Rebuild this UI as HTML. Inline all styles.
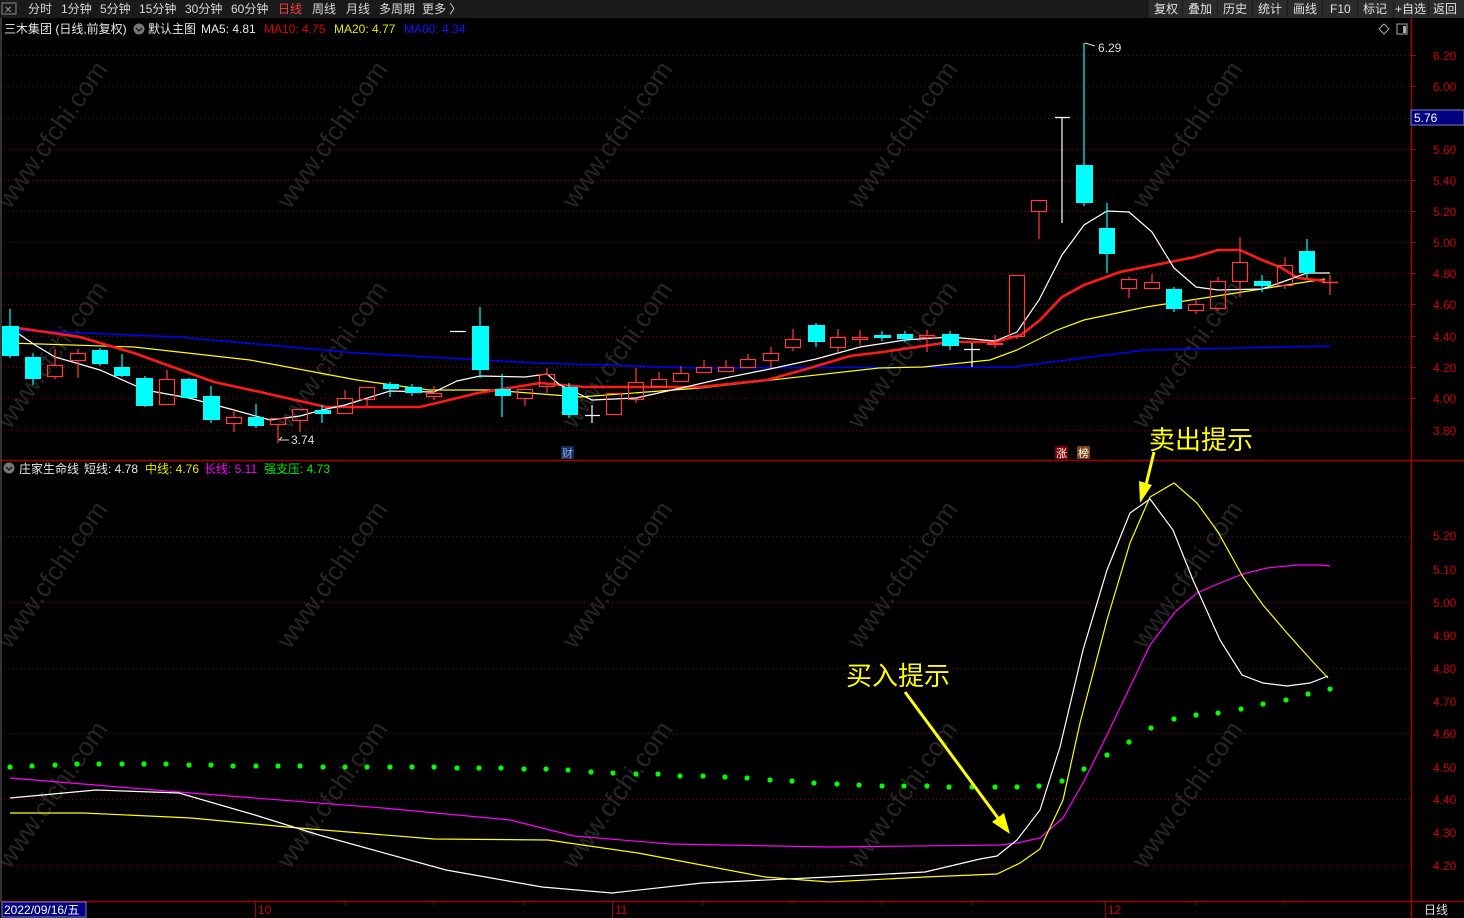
<!DOCTYPE html>
<html><head><meta charset="utf-8"><style>
html,body{margin:0;padding:0;background:#000;width:1464px;height:918px;overflow:hidden}
svg{display:block}
text{font-family:"Liberation Sans","Noto Sans CJK SC",sans-serif}
</style></head><body>
<svg width="1464" height="918" viewBox="0 0 1464 918" xmlns="http://www.w3.org/2000/svg">
<!-- top bar -->
<rect x="0" y="0" width="1464" height="18" fill="#1a1a1a"/>
<rect x="2" y="3" width="14" height="11" fill="none" stroke="#888" stroke-width="1"/>
<text x="4" y="13" font-size="10" fill="#999">✕</text>
<g font-size="12" fill="#d8d8d8">
<text x="28" y="13">分时</text><text x="61" y="13">1分钟</text><text x="100" y="13">5分钟</text><text x="139" y="13">15分钟</text><text x="185" y="13">30分钟</text><text x="231" y="13">60分钟</text><text x="278" y="13" fill="#ff3c3c">日线</text><text x="312" y="13">周线</text><text x="346" y="13">月线</text><text x="379" y="13">多周期</text><text x="422" y="13">更多 〉</text>
</g>
<g fill="#2b2b2b">
<rect x="1149" y="0" width="33" height="18"/><rect x="1183" y="0" width="34" height="18"/><rect x="1218" y="0" width="34" height="18"/><rect x="1253" y="0" width="34" height="18"/><rect x="1288" y="0" width="34" height="18"/><rect x="1323" y="0" width="34" height="18"/><rect x="1358" y="0" width="35" height="18"/><rect x="1394" y="0" width="34" height="18"/><rect x="1429" y="0" width="35" height="18"/>
</g>
<g font-size="12" fill="#e0e0e0">
<text x="1154" y="13">复权</text><text x="1188" y="13">叠加</text><text x="1223" y="13">历史</text><text x="1258" y="13">统计</text><text x="1293" y="13">画线</text><text x="1330" y="13">F10</text><text x="1363" y="13">标记</text><text x="1395" y="13">+自选</text><text x="1433" y="13">返回</text>
</g>
<!-- legend top -->
<g font-size="12">
<text x="4" y="33" fill="#e8e8e8">三木集团 (日线,前复权)</text>
<circle cx="139" cy="29" r="5.5" fill="#777"/><path d="M136 28 L139 31 L142 28" stroke="#111" stroke-width="1.3" fill="none"/>
<text x="148" y="33" fill="#e8e8e8">默认主图</text>
<text x="201" y="33" fill="#e8e8e8">MA5: 4.81</text>
<text x="264" y="33" fill="#e00000">MA10: 4.75</text>
<text x="334" y="33" fill="#e6e600">MA20: 4.77</text>
<text x="404" y="33" fill="#1414ff">MA60: 4.34</text>
</g>
<path d="M1384 24 L1389 29 L1384 34 L1379 29 Z" fill="none" stroke="#aaa"/>
<rect x="1397" y="24" width="10" height="10" fill="none" stroke="#aaa"/><rect x="1403" y="26" width="3" height="7" fill="#aaa"/>
<!-- watermarks -->
<g font-size="26" fill="#262626" font-family="Liberation Sans">
<text transform="translate(10,210) rotate(-55)">www.cfchi.com</text>
<text transform="translate(290,210) rotate(-55)">www.cfchi.com</text>
<text transform="translate(575,210) rotate(-55)">www.cfchi.com</text>
<text transform="translate(860,210) rotate(-55)">www.cfchi.com</text>
<text transform="translate(1145,210) rotate(-55)">www.cfchi.com</text>
<text transform="translate(10,430) rotate(-55)">www.cfchi.com</text>
<text transform="translate(290,430) rotate(-55)">www.cfchi.com</text>
<text transform="translate(575,430) rotate(-55)">www.cfchi.com</text>
<text transform="translate(860,430) rotate(-55)">www.cfchi.com</text>
<text transform="translate(1145,430) rotate(-55)">www.cfchi.com</text>
<text transform="translate(10,650) rotate(-55)">www.cfchi.com</text>
<text transform="translate(290,650) rotate(-55)">www.cfchi.com</text>
<text transform="translate(575,650) rotate(-55)">www.cfchi.com</text>
<text transform="translate(860,650) rotate(-55)">www.cfchi.com</text>
<text transform="translate(1145,650) rotate(-55)">www.cfchi.com</text>
<text transform="translate(10,870) rotate(-55)">www.cfchi.com</text>
<text transform="translate(290,870) rotate(-55)">www.cfchi.com</text>
<text transform="translate(575,870) rotate(-55)">www.cfchi.com</text>
<text transform="translate(860,870) rotate(-55)">www.cfchi.com</text>
<text transform="translate(1145,870) rotate(-55)">www.cfchi.com</text>
</g>
<!-- grid -->
<g stroke="#8a0000" stroke-width="1" stroke-dasharray="1,3">
<line x1="0" x2="1410" y1="55.5" y2="55.5"/><line x1="0" x2="1410" y1="86.5" y2="86.5"/><line x1="0" x2="1410" y1="118.5" y2="118.5"/><line x1="0" x2="1410" y1="149.5" y2="149.5"/><line x1="0" x2="1410" y1="180.5" y2="180.5"/><line x1="0" x2="1410" y1="211.5" y2="211.5"/><line x1="0" x2="1410" y1="242.5" y2="242.5"/><line x1="0" x2="1410" y1="273.5" y2="273.5"/><line x1="0" x2="1410" y1="304.5" y2="304.5"/><line x1="0" x2="1410" y1="336.5" y2="336.5"/><line x1="0" x2="1410" y1="367.5" y2="367.5"/><line x1="0" x2="1410" y1="398.5" y2="398.5"/><line x1="0" x2="1410" y1="430.5" y2="430.5"/>
<line x1="0" x2="1410" y1="536.5" y2="536.5"/><line x1="0" x2="1410" y1="602.5" y2="602.5"/><line x1="0" x2="1410" y1="668.5" y2="668.5"/><line x1="0" x2="1410" y1="733.5" y2="733.5"/><line x1="0" x2="1410" y1="799.5" y2="799.5"/><line x1="0" x2="1410" y1="865.5" y2="865.5"/>
</g>
<!-- frame lines -->
<g stroke="#a00000" stroke-width="1.5">
<line x1="1411.5" y1="18" x2="1411.5" y2="918"/>
<line x1="0" y1="460.5" x2="1464" y2="460.5"/>
<line x1="0" y1="901.5" x2="1464" y2="901.5"/>
<line x1="1" y1="18" x2="1" y2="901" stroke="#444"/>
</g>
<!-- axis labels top -->
<g font-size="12" fill="#cc0000">
<text x="1433" y="60">6.20</text><text x="1433" y="91">6.00</text><text x="1433" y="154">5.60</text><text x="1433" y="185">5.40</text><text x="1433" y="216">5.20</text><text x="1433" y="247">5.00</text><text x="1433" y="278">4.80</text><text x="1433" y="309">4.60</text><text x="1433" y="341">4.40</text><text x="1433" y="372">4.20</text><text x="1433" y="403">4.00</text><text x="1433" y="435">3.80</text>
<text x="1433" y="540">5.20</text><text x="1433" y="574">5.10</text><text x="1433" y="607">5.00</text><text x="1433" y="640">4.90</text><text x="1433" y="673">4.80</text><text x="1433" y="706">4.70</text><text x="1433" y="738">4.60</text><text x="1433" y="772">4.50</text><text x="1433" y="804">4.40</text><text x="1433" y="837">4.30</text><text x="1433" y="870">4.20</text>
</g>
<g stroke="#a00000"><line x1="1411" x2="1416" y1="55.5" y2="55.5"/><line x1="1411" x2="1416" y1="86.5" y2="86.5"/><line x1="1411" x2="1416" y1="149.5" y2="149.5"/><line x1="1411" x2="1416" y1="180.5" y2="180.5"/><line x1="1411" x2="1416" y1="211.5" y2="211.5"/><line x1="1411" x2="1416" y1="242.5" y2="242.5"/><line x1="1411" x2="1416" y1="273.5" y2="273.5"/><line x1="1411" x2="1416" y1="304.5" y2="304.5"/><line x1="1411" x2="1416" y1="336.5" y2="336.5"/><line x1="1411" x2="1416" y1="367.5" y2="367.5"/><line x1="1411" x2="1416" y1="398.5" y2="398.5"/></g>
<rect x="1411" y="110" width="53" height="15" fill="#000080" stroke="#8080c0" stroke-width="1"/>
<text x="1414" y="122" font-size="12" fill="#fff">5.76</text>
<!-- MA lines -->
<polyline fill="none" stroke="#0000ff" stroke-width="1.5" points="10,330 178,337 357,353 536,363 700,368 1012,367 1146,350 1330,346"/>
<polyline fill="none" stroke="#ffff00" stroke-width="1.2" points="9,343 134,347 250,360 357,380 429,390 491,390 580,397 700,388 879,368 923,367 990,360 1017,350 1057,330 1084,320 1146,307 1236,293 1325,279"/>
<polyline fill="none" stroke="#ff1a1a" stroke-width="2.6" points="11,327 80,337 134,353 214,382 260,392 326,407 420,407 478,393 540,383 585,387 647,387 700,387 767,380 803,370 850,356 883,352 950,342 995,342 1021,335 1040,320 1062,297 1084,285 1120,272 1160,264 1195,257 1218,250 1240,250 1262,260 1280,267 1298,278 1325,281"/>
<polyline fill="none" stroke="#ffffff" stroke-width="1.2" points="10,328 35,345 55,357 100,370 145,390 189,398 234,410 270,420 300,416 322,410 345,405 390,391 434,392 457,381 480,376 525,377 547,374 560,385 592,400 636,398 681,388 725,378 770,369 816,359 860,347 905,340 950,337 995,341 1017,332 1039,300 1062,255 1084,225 1107,211 1129,212 1152,232 1174,268 1196,287 1218,290 1262,289 1285,281 1307,273 1330,273"/>
<!-- candles -->
<g stroke="#00ffff" stroke-width="1.2">
<line x1="10" x2="10" y1="309" y2="358"/><line x1="33" x2="33" y1="353" y2="385"/><line x1="100" x2="100" y1="348" y2="366"/><line x1="122" x2="122" y1="354" y2="377"/><line x1="145" x2="145" y1="376" y2="407"/><line x1="189" x2="189" y1="378" y2="399"/><line x1="211" x2="211" y1="386" y2="423"/><line x1="256" x2="256" y1="404" y2="428"/><line x1="322" x2="322" y1="405" y2="423"/><line x1="390" x2="390" y1="382" y2="397"/><line x1="412" x2="412" y1="384" y2="396"/><line x1="480" x2="480" y1="307" y2="378"/><line x1="502" x2="502" y1="374" y2="417"/><line x1="569" x2="569" y1="383" y2="418"/>
<line x1="816" x2="816" y1="323" y2="347"/><line x1="882" x2="882" y1="331" y2="341"/><line x1="905" x2="905" y1="331" y2="342"/><line x1="950" x2="950" y1="331" y2="350"/><line x1="1084" x2="1084" y1="43" y2="206"/><line x1="1107" x2="1107" y1="203" y2="273"/><line x1="1174" x2="1174" y1="287" y2="312"/><line x1="1262" x2="1262" y1="275" y2="292"/><line x1="1307" x2="1307" y1="239" y2="278"/>
</g>
<g fill="#00ffff">
<rect x="2" y="326" width="17" height="30"/><rect x="25" y="357" width="16" height="22"/><rect x="92" y="350" width="16" height="14"/><rect x="114" y="367" width="16" height="9"/><rect x="136" y="378" width="17" height="28"/><rect x="181" y="379" width="16" height="19"/><rect x="203" y="396" width="17" height="24"/><rect x="248" y="417" width="16" height="9"/><rect x="315" y="410" width="16" height="4"/><rect x="383" y="384" width="16" height="5"/><rect x="405" y="387" width="17" height="6"/><rect x="472" y="326" width="17" height="44"/><rect x="495" y="389" width="16" height="7"/><rect x="562" y="387" width="16" height="28"/>
<rect x="808" y="325" width="17" height="17"/><rect x="874" y="335" width="17" height="3"/><rect x="897" y="334" width="16" height="5"/><rect x="942" y="334" width="17" height="12"/><rect x="1076" y="165" width="17" height="38"/><rect x="1099" y="228" width="16" height="26"/><rect x="1166" y="289" width="16" height="20"/><rect x="1254" y="281" width="17" height="5"/><rect x="1299" y="251" width="16" height="22"/>
</g>
<g stroke="#ff3c3c" stroke-width="1.2" fill="none">
<path d="M55 349V365M55 377V379M78 349V353M78 361V378M167 370V379M234 410V417M234 423V432M278 425V443M300 421V432M345 390V398M367 400V406M434 386V393M434 397V400M525 399V406M547 368V374M547 387V393M636 368V382M636 400V403M659 372V379M681 366V373M704 360V367M726 360V367M748 354V359M771 347V353M771 361V368M793 329V339M793 348V351M838 329V337M838 348V352M860 330V337M860 340V345M927 330V335M927 337V352M995 335V343M995 345V348M1017 337V339M1039 212V239M1129 277V279M1129 289V298M1152 274V282M1196 299V304M1196 311V314M1218 277V281M1218 309V311M1240 237V262M1240 282V297M1285 257V265M1285 286V289M1330 275V295"/>
<rect x="47.5" y="365.5" width="15" height="11"/><rect x="70.5" y="353.5" width="15" height="7"/><rect x="159.5" y="379.5" width="15" height="25"/><rect x="226.5" y="417.5" width="15" height="6"/><rect x="270.5" y="418.5" width="15" height="6"/><rect x="292.5" y="409.5" width="15" height="11"/><rect x="337.5" y="398.5" width="15" height="15"/><rect x="359.5" y="387.5" width="15" height="12"/><rect x="426.5" y="393.5" width="15" height="3"/><rect x="517.5" y="389.5" width="15" height="9"/><rect x="539.5" y="374.5" width="15" height="12"/><rect x="606.5" y="393.5" width="15" height="21"/><rect x="628.5" y="382.5" width="15" height="17"/><rect x="651.5" y="379.5" width="15" height="7"/><rect x="673.5" y="373.5" width="15" height="8"/><rect x="696.5" y="367.5" width="15" height="5"/><rect x="718.5" y="367.5" width="15" height="4"/><rect x="740.5" y="359.5" width="15" height="8"/><rect x="763.5" y="353.5" width="15" height="7"/><rect x="785.5" y="339.5" width="15" height="8"/><rect x="830.5" y="337.5" width="15" height="10"/><rect x="852.5" y="337.5" width="15" height="2"/><rect x="919.5" y="335.5" width="15" height="2"/><rect x="987.5" y="343.5" width="15" height="1"/><rect x="1009.5" y="275.5" width="15" height="61"/><rect x="1031.5" y="200.5" width="15" height="11"/><rect x="1121.5" y="279.5" width="15" height="9"/><rect x="1144.5" y="282.5" width="15" height="6"/><rect x="1188.5" y="304.5" width="15" height="6"/><rect x="1210.5" y="281.5" width="15" height="27"/><rect x="1232.5" y="262.5" width="15" height="19"/><rect x="1277.5" y="265.5" width="15" height="20"/>
<line x1="1322" x2="1338" y1="282.5" y2="282.5" stroke-width="1.5"/>
</g>
<g stroke="#fff" stroke-width="1.2" fill="none">
<path d="M450 331.5H466M585 415.5H600M592 405V423M964 349.5H980M972 343V367M1055 117.5H1070M1062 117V223"/>
</g>
<text x="1098" y="52" font-size="12" fill="#ddd">6.29</text>
<path d="M1085 43 L1095 46" stroke="#ddd" fill="none"/>
<text x="291" y="444" font-size="12" fill="#ddd">3.74</text>
<path d="M279 440 L289 440 M279 440 L282 437" stroke="#ddd" fill="none"/>
<rect x="561" y="446" width="13" height="13" fill="#1a2a50"/><text x="562" y="457" font-size="11" fill="#8ab4ff">财</text>
<rect x="1055" y="446" width="13" height="13" fill="#7a0000"/><text x="1056" y="457" font-size="11" fill="#fff">涨</text>
<rect x="1077" y="446" width="13" height="13" fill="#7a4010"/><text x="1078" y="457" font-size="11" fill="#fff">榜</text>
<!-- lower legend -->
<g font-size="12">
<circle cx="9" cy="468" r="5.5" fill="#777"/><path d="M6 467 L9 470 L12 467" stroke="#111" stroke-width="1.3" fill="none"/>
<text x="19" y="473" fill="#e8e8e8">庄家生命线</text>
<text x="84" y="473" fill="#e8e8e8">短线: 4.78</text>
<text x="145" y="473" fill="#e6e600">中线: 4.76</text>
<text x="204" y="473" fill="#ff00ff">长线: 5.11</text>
<text x="264" y="473" fill="#00ee00">强支压: 4.73</text>
</g>
<!-- lower curves -->
<polyline fill="none" stroke="#ff00ff" stroke-width="1.2" points="10,778 191,793 383,808 510,820 574,836 670,844 829,847 1000,845 1017,843 1040,838 1063,818 1083,783 1107,735 1130,687 1150,645 1175,612 1197,593 1220,583 1243,574 1267,568 1297,565 1320,565 1330,566"/>
<polyline fill="none" stroke="#ffff00" stroke-width="1.2" points="10,813 83,813 191,818 287,827 434,839 548,840 638,853 765,877 829,882 925,877 997,874 1020,863 1040,849 1063,800 1080,723 1107,620 1130,543 1150,497 1174,483 1197,503 1218,532 1243,577 1263,605 1287,633 1313,662 1328,678"/>
<polyline fill="none" stroke="#ffffff" stroke-width="1.2" points="10,798 96,790 179,793 255,815 319,835 446,870 542,887 612,893 702,883 829,877 925,872 980,859 997,856 1017,840 1040,810 1060,747 1083,650 1107,570 1130,513 1150,499 1173,530 1193,580 1220,640 1242,675 1263,683 1287,686 1310,683 1328,676"/>
<g fill="#00ff00">
<circle cx="10" cy="767" r="2.6"/><circle cx="32" cy="766" r="2.6"/><circle cx="55" cy="765" r="2.6"/><circle cx="77" cy="764" r="2.6"/><circle cx="99" cy="764" r="2.6"/><circle cx="122" cy="764" r="2.6"/><circle cx="144" cy="764" r="2.6"/><circle cx="166" cy="764" r="2.6"/><circle cx="189" cy="765" r="2.6"/><circle cx="211" cy="765" r="2.6"/><circle cx="233" cy="766" r="2.6"/><circle cx="256" cy="766" r="2.6"/><circle cx="278" cy="766" r="2.6"/><circle cx="300" cy="766" r="2.6"/><circle cx="323" cy="767" r="2.6"/><circle cx="345" cy="767" r="2.6"/><circle cx="367" cy="767" r="2.6"/><circle cx="390" cy="767" r="2.6"/><circle cx="412" cy="767" r="2.6"/><circle cx="434" cy="767" r="2.6"/><circle cx="457" cy="768" r="2.6"/><circle cx="479" cy="768" r="2.6"/><circle cx="501" cy="768" r="2.6"/><circle cx="524" cy="769" r="2.6"/><circle cx="546" cy="769" r="2.6"/><circle cx="568" cy="770" r="2.6"/><circle cx="591" cy="772" r="2.6"/><circle cx="613" cy="773" r="2.6"/><circle cx="636" cy="774" r="2.6"/><circle cx="658" cy="774" r="2.6"/><circle cx="680" cy="776" r="2.6"/><circle cx="703" cy="776" r="2.6"/><circle cx="725" cy="777" r="2.6"/><circle cx="747" cy="778" r="2.6"/><circle cx="770" cy="780" r="2.6"/><circle cx="792" cy="781" r="2.6"/><circle cx="814" cy="783" r="2.6"/><circle cx="837" cy="784" r="2.6"/><circle cx="859" cy="785" r="2.6"/><circle cx="882" cy="786" r="2.6"/><circle cx="904" cy="786" r="2.6"/><circle cx="927" cy="786" r="2.6"/><circle cx="949" cy="787" r="2.6"/><circle cx="972" cy="787" r="2.6"/><circle cx="995" cy="787" r="2.6"/><circle cx="1017" cy="787" r="2.6"/><circle cx="1039" cy="786" r="2.6"/><circle cx="1062" cy="781" r="2.6"/><circle cx="1084" cy="769" r="2.6"/><circle cx="1107" cy="755" r="2.6"/><circle cx="1129" cy="742" r="2.6"/><circle cx="1151" cy="728" r="2.6"/><circle cx="1174" cy="719" r="2.6"/><circle cx="1196" cy="715" r="2.6"/><circle cx="1218" cy="713" r="2.6"/><circle cx="1241" cy="709" r="2.6"/><circle cx="1263" cy="704" r="2.6"/><circle cx="1286" cy="700" r="2.6"/><circle cx="1308" cy="694" r="2.6"/><circle cx="1330" cy="689" r="2.6"/>
</g>
<!-- annotations -->
<g fill="#ffff00" stroke="none">
<text x="1149" y="449" font-size="26">卖出提示</text>
<text x="846" y="685" font-size="26">买入提示</text>
</g>
<line x1="1154" y1="452" x2="1146" y2="485" stroke="#ffff00" stroke-width="3"/>
<path d="M1139 481 L1152 485 L1140 503 Z" fill="#ffff00"/>
<line x1="905" y1="692" x2="998" y2="818" stroke="#ffff00" stroke-width="3"/>
<path d="M992 822 L1004 813 L1010 834 Z" fill="#ffff00"/>
<!-- time axis -->
<rect x="2" y="902" width="84" height="15" fill="#000080" stroke="#8080c0"/>
<text x="4" y="914" font-size="12" fill="#fff">2022/09/16/五</text>
<g stroke="#a00000"><line x1="255.5" x2="255.5" y1="902" y2="918"/><line x1="612.5" x2="612.5" y1="902" y2="918"/><line x1="1105.5" x2="1105.5" y1="902" y2="918"/><line x1="345" x2="345" y1="902" y2="905"/><line x1="434" x2="434" y1="902" y2="905"/><line x1="524" x2="524" y1="902" y2="905"/><line x1="703" x2="703" y1="902" y2="905"/><line x1="792" x2="792" y1="902" y2="905"/><line x1="882" x2="882" y1="902" y2="905"/><line x1="972" x2="972" y1="902" y2="905"/><line x1="1196" x2="1196" y1="902" y2="905"/><line x1="1285" x2="1285" y1="902" y2="905"/></g>
<g font-size="12" fill="#cc0000"><text x="258" y="914">10</text><text x="615" y="914">11</text><text x="1108" y="914">12</text></g>
<text x="1424" y="914" font-size="12" fill="#ddd">日线</text>
</svg>
</body></html>
